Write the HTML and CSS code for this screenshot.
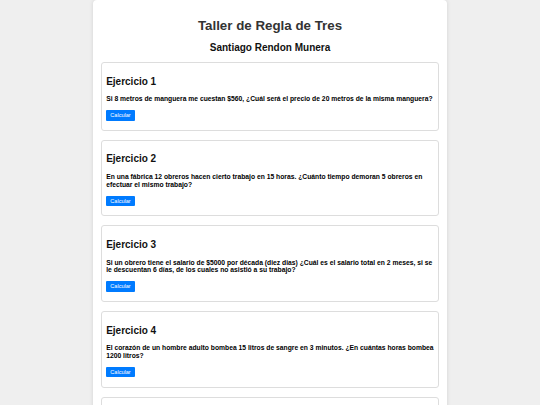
FILE: index.html
```html
<!DOCTYPE html>
<html lang="es">
<head>
<meta charset="utf-8">
<title>Taller de Regla de Tres</title>
<link rel="stylesheet" href="styles.css">
</head>
<body>
<div class="container">
  <h1 class="title">Taller de Regla de Tres</h1>
  <h2 class="subtitle">Santiago Rendon Munera</h2>

  <div class="card">
    <h2 class="card-title">Ejercicio 1</h2>
    <p class="question">Si 8 metros de manguera me cuestan $560, ¿Cuál será el precio de 20 metros de la misma manguera?</p>
    <button class="btn">Calcular</button>
    <div class="result"></div>
  </div>

  <div class="card">
    <h2 class="card-title">Ejercicio 2</h2>
    <p class="question">En una fábrica 12 obreros hacen cierto trabajo en 15 horas. ¿Cuánto tiempo demoran 5 obreros en efectuar el mismo trabajo?</p>
    <button class="btn">Calcular</button>
    <div class="result"></div>
  </div>

  <div class="card">
    <h2 class="card-title">Ejercicio 3</h2>
    <p class="question">Si un obrero tiene el salario de $5000 por década (diez dias) ¿Cuál es el salario total en 2 meses, si se le descuentan 6 días, de los cuales no asistió a su trabajo?</p>
    <button class="btn">Calcular</button>
    <div class="result"></div>
  </div>

  <div class="card">
    <h2 class="card-title">Ejercicio 4</h2>
    <p class="question">El corazón de un hombre adulto bombea 15 litros de sangre en 3 minutos. ¿En cuántas horas bombea 1200 litros?</p>
    <button class="btn">Calcular</button>
    <div class="result"></div>
  </div>

  <div class="card">
    <h2 class="card-title">Ejercicio 5</h2>
    <p class="question">Pregunta del ejercicio 5.</p>
    <button class="btn">Calcular</button>
    <div class="result"></div>
  </div>
</div>
</body>
</html>
```

FILE: styles.css
```css
html, body {
  margin: 0;
  padding: 0;
}
body {
  background: #efefef;
  font-family: "Liberation Sans", Arial, Helvetica, sans-serif;
  font-size: 6.75px;
  color: #000;
}
.container {
  width: 338px;
  margin: 0 auto;
  padding: 8.33px;
  background: #fff;
  border-radius: 4px;
  box-shadow: 0 0 4px rgba(0, 0, 0, 0.12);
}
.title {
  font-size: 13.33px;
  line-height: 15.3px;
  color: #333;
  text-align: center;
  margin: 10.1px 0 0;
}
.subtitle {
  font-size: 10px;
  line-height: 11.5px;
  color: #111;
  text-align: center;
  margin: 8.5px 0 8.3px;
}
.card {
  border: 1px solid #ddd;
  border-radius: 3px;
  padding: 4.17px;
  margin-bottom: 9px;
}
.card-title {
  font-size: 10px;
  line-height: 11.5px;
  color: #111;
  margin: 8.4px 0 8.1px;
}
.question {
  font-weight: bold;
  line-height: 7.7px;
  margin: 6.75px 0 7.1px;
}
.btn {
  display: block;
  font-family: "Liberation Sans", Arial, Helvetica, sans-serif;
  font-size: 5.56px;
  line-height: 6.4px;
  padding: 2.1px 4.17px;
  background: #007bff;
  color: #fff;
  border: none;
  border-radius: 1px;
}
.result {
  height: 5.2px;
}
```
